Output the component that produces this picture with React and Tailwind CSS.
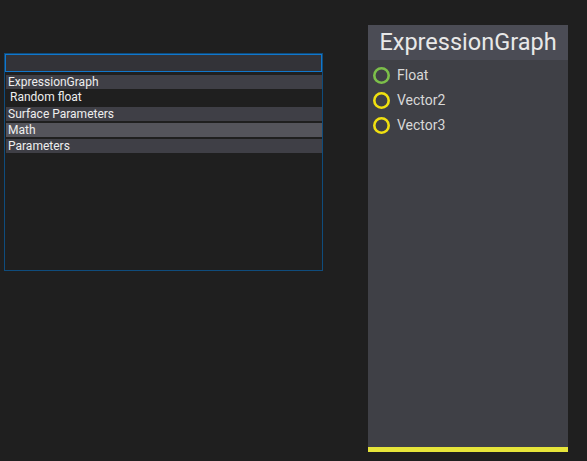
export default function App() {
  const font = { fontFamily: "Roboto, 'Noto Sans', sans-serif" };
  return (
    <div className="relative w-[587px] h-[461px] bg-[#1f1f1f] overflow-hidden" style={font}>
      {/* search popup */}
      <div className="absolute left-[4px] top-[53px] w-[319px] h-[218px] border border-[#0f4c7c] bg-[#1f1f1f] flex flex-col">
        <div className="mx-0 h-[18px] border border-[#1177cc] bg-[#333338]" />
        <div className="mt-[3px] flex flex-col pl-[1px] text-[12px] leading-[14px] text-[#eeeeee]">
          <div className="h-[14px] bg-[#3f3f46] pl-[2px]">ExpressionGraph</div>
          <div className="h-[18px] pl-[4px] pt-[1px]">Random float</div>
          <div className="h-[14px] bg-[#3f3f46] pl-[2px]">Surface Parameters</div>
          <div className="mt-[2px] h-[14px] bg-[#54545b] pl-[2px]">Math</div>
          <div className="mt-[2px] h-[14px] bg-[#3f3f46] pl-[2px]">Parameters</div>
        </div>
      </div>

      {/* node */}
      <div className="absolute left-[368px] top-[25px] w-[200px] h-[427px] bg-[#3f4046] flex flex-col">
        <div className="h-[35px] bg-[#4b4c55] flex items-center justify-center text-[23.5px] text-[#e8e8e8]">
          ExpressionGraph
        </div>
        <div className="flex flex-col pt-[6px] pl-[5px] gap-[7px] text-[14px] text-[#d8d8d8]">
          {[
            ["Float", "#7cbf4a"],
            ["Vector2", "#f0e010"],
            ["Vector3", "#f0e010"],
          ].map(([n, c]) => (
            <div key={n} className="flex items-center h-[18px]">
              <svg width="17" height="17" viewBox="0 0 17 17">
                <circle cx="8.5" cy="8.5" r="7.2" fill="none" stroke={c} strokeWidth="2.6" />
              </svg>
              <span className="ml-[7px]">{n}</span>
            </div>
          ))}
        </div>
        <div className="mt-auto h-[5px] bg-[#e6e53a]" />
      </div>
    </div>
  );
}
